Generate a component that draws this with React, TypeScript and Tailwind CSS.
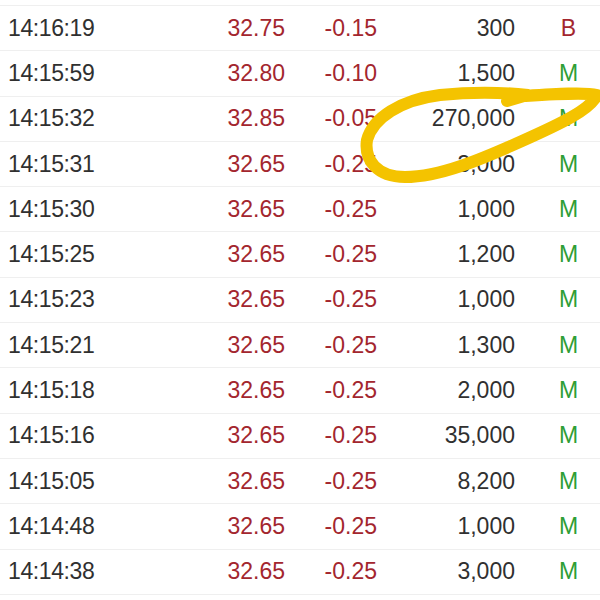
import React from 'react';

interface Trade {
  time: string;
  price: string;
  change: string;
  volume: string;
  flag: 'B' | 'M';
}

const trades: Trade[] = [
  { time: '14:16:19', price: '32.75', change: '-0.15', volume: '300', flag: 'B' },
  { time: '14:15:59', price: '32.80', change: '-0.10', volume: '1,500', flag: 'M' },
  { time: '14:15:32', price: '32.85', change: '-0.05', volume: '270,000', flag: 'M' },
  { time: '14:15:31', price: '32.65', change: '-0.25', volume: '3,000', flag: 'M' },
  { time: '14:15:30', price: '32.65', change: '-0.25', volume: '1,000', flag: 'M' },
  { time: '14:15:25', price: '32.65', change: '-0.25', volume: '1,200', flag: 'M' },
  { time: '14:15:23', price: '32.65', change: '-0.25', volume: '1,000', flag: 'M' },
  { time: '14:15:21', price: '32.65', change: '-0.25', volume: '1,300', flag: 'M' },
  { time: '14:15:18', price: '32.65', change: '-0.25', volume: '2,000', flag: 'M' },
  { time: '14:15:16', price: '32.65', change: '-0.25', volume: '35,000', flag: 'M' },
  { time: '14:15:05', price: '32.65', change: '-0.25', volume: '8,200', flag: 'M' },
  { time: '14:14:48', price: '32.65', change: '-0.25', volume: '1,000', flag: 'M' },
  { time: '14:14:38', price: '32.65', change: '-0.25', volume: '3,000', flag: 'M' },
];

const TradeRow: React.FC<{ trade: Trade }> = ({ trade }) => (
  <div className="grid grid-cols-[200px_85px_92px_138px_85px] items-center h-[45.3px] border-b border-[#efefef] text-[23px] leading-none">
    <span className="pl-[8px] text-[#303030] tracking-[-0.4px]">{trade.time}</span>
    <span className="text-right text-[#a3262e]">{trade.price}</span>
    <span className="text-right text-[#a3262e]">{trade.change}</span>
    <span className="text-right text-[#303030]">{trade.volume}</span>
    <span
      className={`pl-[22px] text-center ${
        trade.flag === 'B' ? 'text-[#a3262e]' : 'text-[#2f9e35]'
      }`}
    >
      {trade.flag}
    </span>
  </div>
);

export default function App() {
  return (
    <div
      className="relative w-[600px] h-[600px] overflow-hidden bg-white pt-[5px]"
      style={{ fontFamily: '"Liberation Sans", Arial, sans-serif' }}
    >
      <div className="border-t border-[#efefef]">
        {trades.map((t, i) => (
          <TradeRow key={i} trade={t} />
        ))}
      </div>

      {/* highlighter mark */}
      <svg
        className="absolute left-0 top-0 pointer-events-none"
        width="600"
        height="600"
        viewBox="0 0 600 600"
      >
        <path
          d="M 507 101 L 524 96 C 555 94, 585 92, 597 95 C 590 110, 560 124, 522 141 C 482 159, 440 177, 405 177 C 377 177, 364 160, 367 140 C 373 118, 400 100, 440 95 C 470 92, 500 92, 528 95"
          fill="none"
          stroke="#f4c300"
          strokeWidth="12"
          strokeLinecap="round"
          strokeLinejoin="round"
        />
      </svg>
    </div>
  );
}
